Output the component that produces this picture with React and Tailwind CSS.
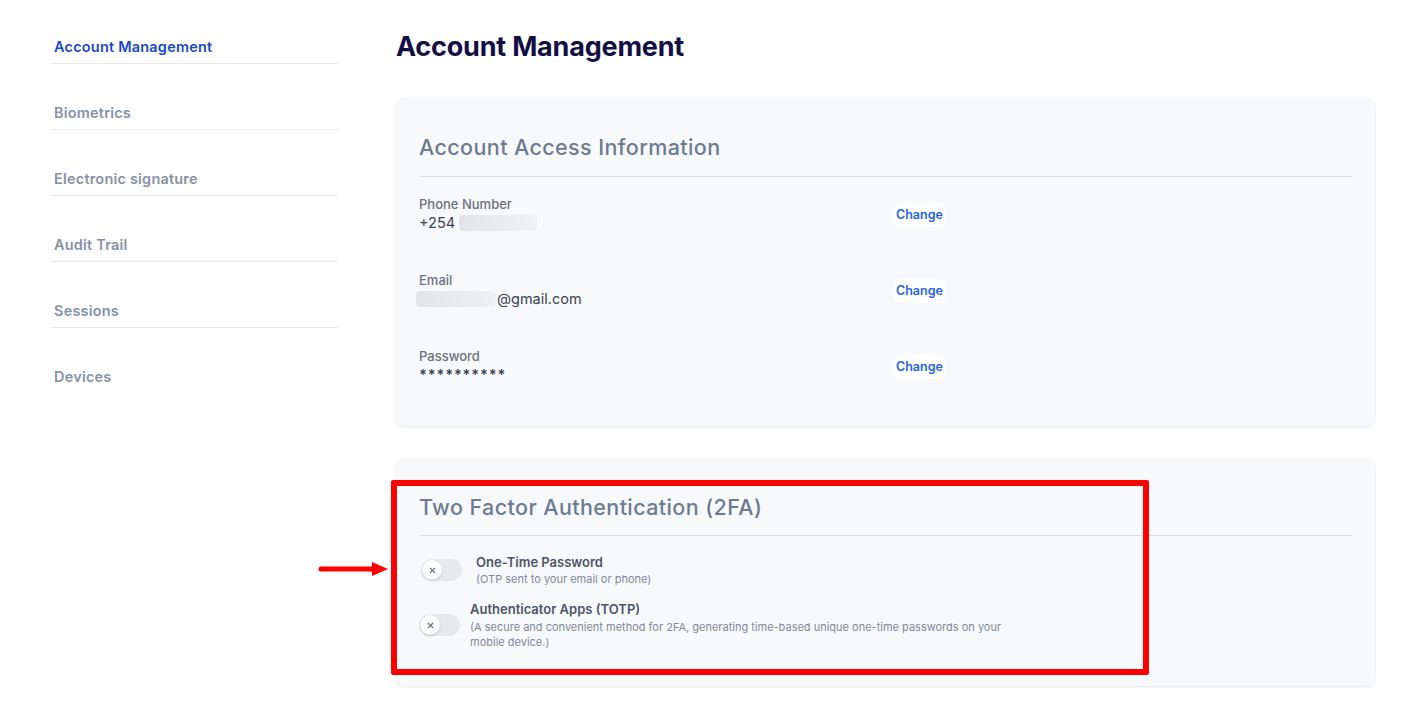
import { X } from 'lucide-react';

const navItems = ['Account Management', 'Biometrics', 'Electronic signature', 'Audit Trail', 'Sessions', 'Devices'];

function Toggle() {
  return (
    <div className="flex h-[22px] w-[41px] shrink-0 items-center rounded-full bg-[#e6e8ec] px-[1px]">
      <div className="flex h-[20px] w-[20px] items-center justify-center rounded-full bg-white shadow-[0_1px_2px_rgba(0,0,0,0.2)]">
        <X size={9} strokeWidth={3} className="text-gray-500" />
      </div>
    </div>
  );
}

function InfoRow({ label, value, blurWidth, blurFirst, valueClass = '' }) {
  return (
    <div className="grid grid-cols-[474px_1fr] items-center">
      <div>
        <p className="text-[13px] leading-[18px] font-medium text-[#6b7280]">{label}</p>
        <div className="flex items-center text-[14.5px] leading-[20px] text-[#3b4250]">
          {blurFirst && <span className="mr-[1px] -ml-[3px] inline-block h-[16px] rounded-sm bg-gradient-to-r from-[#e3e4e7] to-[#f0f1f3]" style={{ width: blurWidth }} />}
          <span className={valueClass}>{value}</span>
          {!blurFirst && blurWidth && <span className="ml-[4px] inline-block h-[16px] rounded-sm bg-gradient-to-r from-[#e3e4e7] to-[#f1f2f4]" style={{ width: blurWidth }} />}
        </div>
      </div>
      <div>
        <button className="rounded-md bg-white px-[3px] py-[3px] text-[12.5px] font-semibold text-[#2563eb]">Change</button>
      </div>
    </div>
  );
}

export default function App() {
  return (
    <div className="relative min-h-screen bg-white" style={{ fontFamily: 'Inter, "Noto Sans", sans-serif' }}>
      <div className="flex">
        {/* Sidebar */}
        <aside className="ml-[51px] w-[287px] shrink-0 pt-[37px]">
          {navItems.map((item, i) => (
            <div key={item} className={`mb-[39px] pb-[6px] pl-[3px] ${i < navItems.length - 1 ? 'border-b border-[#e8eaee]' : ''}`}>
              <span className={`block text-[14.5px] leading-[20px] font-semibold tracking-[0.2px] ${i === 0 ? 'text-[#1a47c9]' : 'text-[#8592a6]'}`}>{item}</span>
            </div>
          ))}
        </aside>

        {/* Main */}
        <main className="ml-[58px] flex-1 pr-[48px] pt-[31px] pb-[24px]">
          <h1 className="text-[27px] leading-[32px] font-bold tracking-[-0.2px] text-[#130f45]">Account Management</h1>

          <section className="mt-[35px] rounded-lg bg-[#f8f9fb] px-[23px] pt-[35px] pb-[41px] shadow-[0_1px_3px_rgba(0,0,0,0.1)]">
            <h2 className="border-b border-[#dcdfe5] pb-[15px] text-[21.5px] leading-[28px] font-medium tracking-[0.4px] text-[#6b7b93]">Account Access Information</h2>
            <div className="mt-[18px] flex flex-col gap-[38px]">
              <InfoRow label="Phone Number" value="+254" blurWidth={78} />
              <InfoRow label="Email" value="@gmail.com" blurWidth={80} blurFirst />
              <InfoRow label="Password" value="**********" valueClass="font-semibold tracking-[0.9px]" />
            </div>
          </section>

          <section className="mt-[33px] rounded-lg bg-[#f8f9fb] px-[23px] pt-[34px] pb-[36px] shadow-[0_1px_3px_rgba(0,0,0,0.1)]">
            <h2 className="border-b border-[#dcdfe5] pb-[14px] text-[21.5px] leading-[28px] font-medium tracking-[0.4px] text-[#6b7b93]">Two Factor Authentication (2FA)</h2>
            <div className="mt-[17px] flex items-center gap-[14px] pl-[2px]">
              <Toggle />
              <div>
                <p className="mb-[1px] text-[13px] leading-[18px] font-semibold text-[#4b5568]">One-Time Password</p>
                <p className="text-[11px] leading-[15px] text-[#7c8aa0]">(OTP sent to your email or phone)</p>
              </div>
            </div>
            <div className="mt-[13px] flex items-center gap-[10px]">
              <Toggle />
              <div className="max-w-[540px]">
                <p className="mb-[2px] text-[13px] leading-[18px] font-semibold text-[#4b5568]">Authenticator Apps (TOTP)</p>
                <p className="text-[11px] leading-[15px] text-[#7c8aa0]">(A secure and convenient method for 2FA, generating time-based unique one-time passwords on your mobile device.)</p>
              </div>
            </div>
          </section>
        </main>
      </div>

      {/* Annotation overlay */}
      <div className="pointer-events-none absolute left-[391px] top-[480px] h-[195px] w-[758px] rounded-[2px] border-[6px] border-[#ff0000]" />
      <svg className="pointer-events-none absolute left-[317px] top-[560px]" width="72" height="18" viewBox="0 0 72 18">
        <line x1="4" y1="9" x2="58" y2="9" stroke="#ff0000" strokeWidth="5" strokeLinecap="round" />
        <polygon points="55,2 71,9 55,16" fill="#ff0000" />
      </svg>
    </div>
  );
}
